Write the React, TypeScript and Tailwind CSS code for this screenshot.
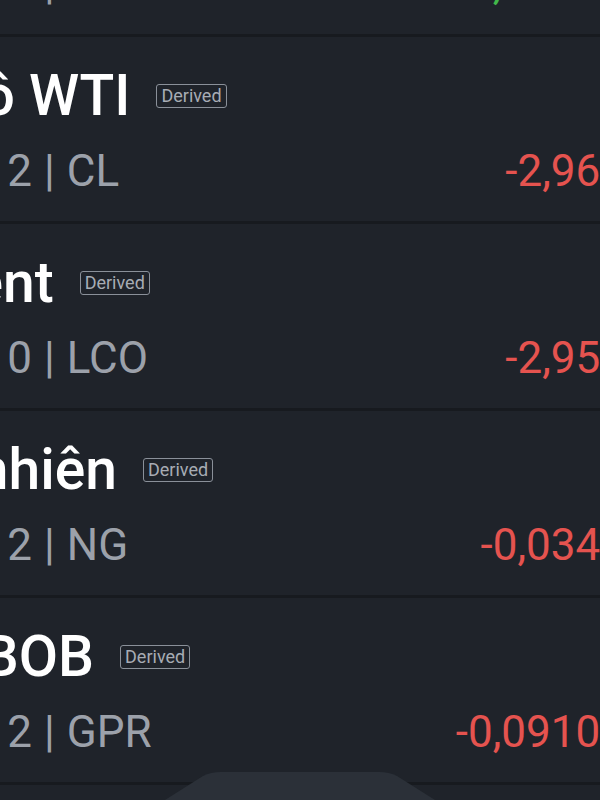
import React from "react";

type Row = {
  name: string;
  nameShift: string;
  lot: string;
  code: string;
  value: string;
  up?: boolean;
};

const rows: Row[] = [
  { name: "Vàng", nameShift: "ml-[-160px]", lot: "2", code: "GC", value: "+0,01234", up: true },
  { name: "Dầu thô WTI", nameShift: "ml-[-182px]", lot: "2", code: "CL", value: "-2,962" },
  { name: "Dầu Brent", nameShift: "ml-[-197px]", lot: "0", code: "LCO", value: "-2,951" },
  { name: "Khí tự nhiên", nameShift: "ml-[-188px]", lot: "2", code: "NG", value: "-0,0345" },
  { name: "Xăng RBOB", nameShift: "ml-[-198px]", lot: "2", code: "GPR", value: "-0,09102" },
  { name: "Dầu sưởi", nameShift: "ml-[-160px]", lot: "2", code: "HO", value: "-0,1120" },
];

const QuoteRow = ({ row }: { row: Row }) => {
  return (
    <div className="h-[187px] shrink-0 border-b-[3px] border-[#171a1f] flex flex-col">
      <div className={`flex items-center gap-[26px] pt-[30px] h-[87px] whitespace-nowrap ${row.nameShift}`}>
        <span className="text-[57px] leading-none font-medium text-white">{row.name}</span>
        <span className="border-[1.5px] border-[#8a9099] rounded-[3px] px-[4px] h-[24px] flex items-center text-[18px] leading-none text-[#a7acb4]">
          Derived
        </span>
      </div>
      <div className="flex items-center justify-between mt-[25px] whitespace-nowrap">
        <div className="flex items-center text-[44px] leading-none text-[#9ca1aa]">
          <span className="ml-[-190px] w-[222px] text-right">Vị thế {row.lot}</span>
          <span className="mx-[12px]">|</span>
          <span>{row.code}</span>
        </div>
        <span
          className={`text-[44px] leading-none mr-[-25px] ${row.up ? "text-[#41b84a]" : "text-[#e5534f]"}`}
        >
          {row.value}
        </span>
      </div>
    </div>
  );
};

export default function App() {
  return (
    <div
      className="w-[600px] h-[800px] overflow-hidden relative bg-[#1f232a]"
      style={{ fontFamily: "Roboto, 'Noto Sans', sans-serif" }}
    >
      <div className="flex flex-col mt-[-150px]">
        {rows.map((r) => (
          <QuoteRow key={r.name} row={r} />
        ))}
      </div>
      {/* bottom tab handle */}
      <div className="absolute bottom-0 left-0 right-0 flex justify-center pointer-events-none">
        <svg width="270" height="30" viewBox="0 0 270 30">
          <path d="M0 30 L38 6 Q46 2 56 2 L214 2 Q224 2 232 6 L270 30 Z" fill="#2b3038" />
        </svg>
      </div>
    </div>
  );
}
